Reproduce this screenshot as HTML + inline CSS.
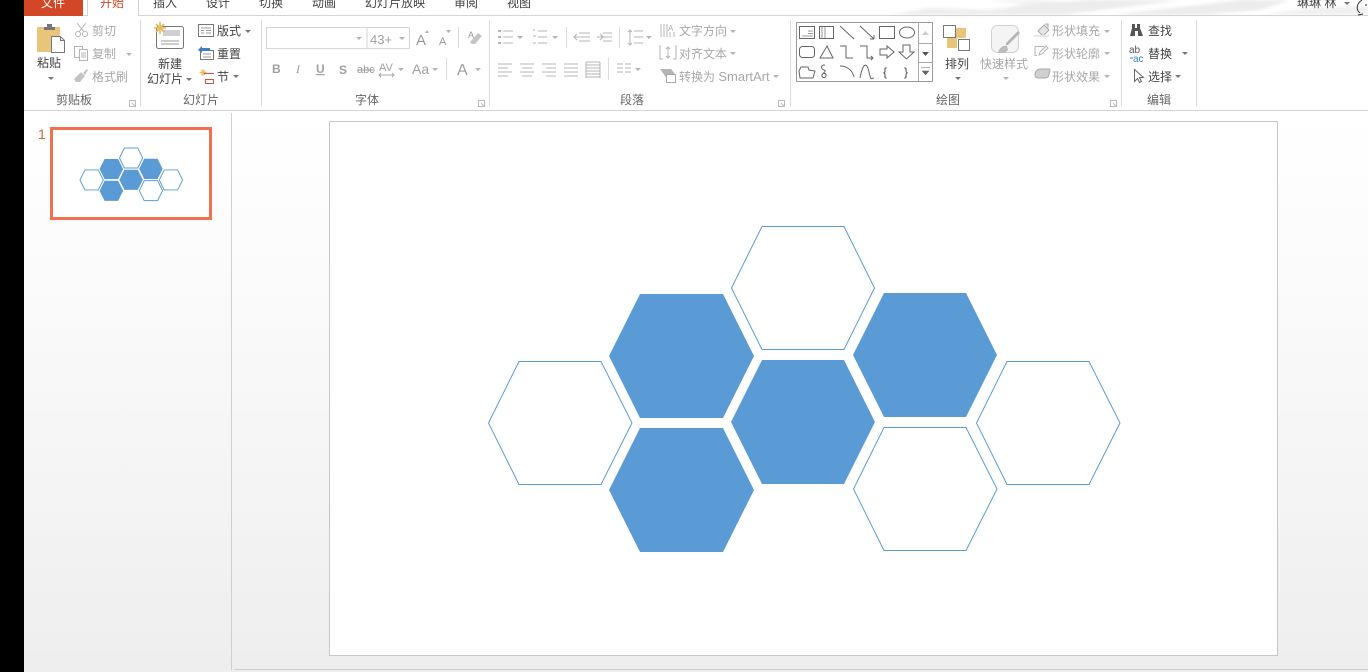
<!DOCTYPE html>
<html lang="zh"><head><meta charset="utf-8"><title>PowerPoint</title>
<style>
html,body{margin:0;padding:0;width:1368px;height:672px;overflow:hidden;background:#fff}
svg{display:block}
text{font-family:"Liberation Sans","Noto Sans CJK SC",sans-serif;font-size:12px;fill:#444}
.g text,text.g{fill:#a8a8a8}
.lb{fill:#666}
.i{fill:none;stroke:#777;stroke-width:1}
.d{fill:none;stroke:#b4b4b4;stroke-width:1}
.sep{stroke:#dcdcdc;stroke-width:1}
.ar{fill:#777}
.ag{fill:#b4b4b4}
.sh{fill:none;stroke:#666;stroke-width:1}
.hf{fill:#5b9bd5}
.ho{fill:#fff;stroke:#5b9bd5;stroke-width:1}
</style></head><body>
<svg width="1368" height="672" viewBox="0 0 1368 672" xmlns="http://www.w3.org/2000/svg">
<defs>
<linearGradient id="bg" x1="0" y1="0" x2="0" y2="1"><stop offset="0" stop-color="#ffffff"/><stop offset="0.3" stop-color="#fbfbfb"/><stop offset="1" stop-color="#eeeeee"/></linearGradient>
<filter id="bl" x="-20%" y="-100%" width="140%" height="300%"><feGaussianBlur stdDeviation="1.5"/></filter>
</defs>
<rect width="1368" height="672" fill="#fff"/>
<rect x="24" y="111" width="1344" height="561" fill="url(#bg)"/>
<rect x="0" y="0" width="24" height="672" fill="#000"/>

<!-- title pattern -->
<g filter="url(#bl)" fill="#ececec">
<path d="M890 15 L930 8 L990 10 L1040 3 L1090 0 L1180 0 L1110 9 L1060 15Z"/>
<path d="M1110 15 L1190 6 L1240 0 L1290 0 L1260 10 L1200 15Z"/>
<path d="M985 0 L1060 0 L1030 5Z" fill="#f2f2f2"/>
<path d="M1260 15 L1310 8 L1368 6 L1368 15Z" fill="#f0f0f0"/>
</g>
<line x1="24" y1="15.5" x2="87" y2="15.5" stroke="#d4d4d4"/>
<line x1="138" y1="15.5" x2="1368" y2="15.5" stroke="#d4d4d4"/>

<!-- tabs -->
<rect x="24" y="0" width="59" height="16" fill="#d24726"/>
<text x="41" y="7" style="fill:#fff">文件</text>
<path d="M87.5 0V16M138.5 0V16" stroke="#d4d4d4" fill="none"/>
<text x="100" y="7" style="fill:#d24726">开始</text>
<text x="153" y="7">插入</text><text x="206" y="7">设计</text><text x="259" y="7">切换</text><text x="312" y="7">动画</text>
<text x="365" y="7">幻灯片放映</text><text x="454" y="7">审阅</text><text x="507" y="7">视图</text>
<text x="1297" y="7">琳琳 林</text>
<path class="ar" d="M1344 2h6l-3 3z"/>
<path d="M1362 0C1356 4 1356 10 1360 13M1358 15l5-1M1366 4v2" fill="none" stroke="#333" stroke-width="1"/>

<!-- ribbon borders -->
<line x1="24" y1="110.5" x2="1368" y2="110.5" stroke="#d4d4d4"/>
<g class="sep"><line x1="140.5" y1="20" x2="140.5" y2="106"/><line x1="261.5" y1="20" x2="261.5" y2="106"/><line x1="489.5" y1="20" x2="489.5" y2="106"/><line x1="790.5" y1="20" x2="790.5" y2="106"/><line x1="1121.5" y1="20" x2="1121.5" y2="106"/><line x1="1196.5" y1="20" x2="1196.5" y2="106"/></g>

<!-- group labels -->
<text class="lb" x="56" y="104">剪贴板</text><text class="lb" x="183" y="104">幻灯片</text><text class="lb" x="355" y="104">字体</text><text class="lb" x="620" y="104">段落</text><text class="lb" x="936" y="104">绘图</text><text class="lb" x="1147" y="104">编辑</text>
<g fill="none" stroke="#bbb"><path d="M129.5 100.5h6v6h-6zM132 103l3 3"/><path d="M478.5 100.5h6v6h-6zM481 103l3 3"/><path d="M778.5 100.5h6v6h-6zM781 103l3 3"/><path d="M1110.5 100.5h6v6h-6zM1113 103l3 3"/></g>

<!-- clipboard -->
<rect x="37" y="27" width="23" height="25" rx="1" fill="#e9c57c"/>
<path d="M44 30v-3h3v-3h5v3h3v3z" fill="#777"/>
<path d="M51.5 36.5h9l4 4v12h-13z" fill="#fff" stroke="#777"/><path d="M60.5 36.5v4h4" fill="none" stroke="#777"/>
<text x="37" y="67">粘贴</text><path class="ar" d="M48 77h6l-3 3z"/>
<path class="d" d="M77 23l7 9M86 23l-7 9"/><circle class="d" cx="78" cy="34" r="2.5"/><circle class="d" cx="85" cy="34" r="2.5"/>
<g class="d"><rect x="74.5" y="46.5" width="8" height="11"/><rect x="79.5" y="49.5" width="8" height="11" fill="#fff"/><path d="M81 53h5M81 55h5M81 57h5"/></g>
<path d="M74 79l7-7 4 4-5 6h-4zM83 73l4-4 1 1-3 5z" fill="#c4c4c4"/>
<g class="g"><text x="92" y="35">剪切</text><text x="92" y="58">复制</text><text x="92" y="81">格式刷</text></g>
<path class="ag" d="M126 53h6l-3 3z"/>

<!-- slides -->
<rect x="156.5" y="26.5" width="27" height="22" rx="2" fill="#fff" stroke="#777"/>
<rect x="163" y="30" width="17" height="6" fill="#cfcfcf"/><path d="M161 41h18M161 44h18" stroke="#999" fill="none"/>
<path d="M160 22v12M154 28h12M156 24l8 8M164 24l-8 8" stroke="#e9b75c" stroke-width="1.6"/>
<text x="158" y="68">新建</text><text x="147" y="83">幻灯片</text><path class="ar" d="M186 78h6l-3 3z"/>
<rect x="198.5" y="24.5" width="15" height="12" fill="#fff" stroke="#777"/><path d="M201 28h10M201 30.5h3M206 30.5h5M201 33h3M206 33h5" stroke="#999" fill="none"/>
<text x="217" y="35">版式</text><path class="ar" d="M245 30h6l-3 3z"/>
<rect x="200.5" y="50.5" width="13" height="9" fill="#fff" stroke="#777"/><path d="M203 54h8M203 57h8" stroke="#999" fill="none"/>
<path d="M198 50l4-4v2h8v3h-8v2z" fill="#3f7fbf"/>
<text x="217" y="58">重置</text>
<path d="M203 69v7M199.5 72.500h7M201 70l4 5M205 70l-4 5" stroke="#e9b75c"/>
<path d="M204 73.500h10M205 79.500h9M205 83.500h9M205.500 79v5M213.500 79v5" fill="none" stroke="#c9563c"/>
<text x="217" y="81">节</text><path class="ar" d="M233 75h6l-3 3z"/>

<!-- font -->
<rect x="266.500" y="27.500" width="143" height="21" fill="#fff" stroke="#d6d6d6"/><line x1="367" y1="27" x2="367" y2="49" stroke="#d6d6d6"/>
<text x="370" y="44" class="g" style="font-size:13px;fill:#a0a0a0">43+</text>
<path class="ag" d="M356 37h6l-3 3zM399 37h6l-3 3z"/>
<text x="416" y="45" class="g" style="font-size:15px;fill:#999">A</text><path class="ag" d="M425 33l2-3 2 3z"/>
<text x="439" y="45" class="g" style="font-size:11px;fill:#999">A</text><path class="ag" d="M446 30h5l-2.500 3z"/>
<line x1="458.500" y1="27" x2="458.500" y2="48" class="sep"/>
<text x="468" y="38" style="font-size:9px;fill:#999">A</text><path d="M470 42l8-9 4 3-7 8h-3z" fill="#c4c4c4"/>
<g style="fill:#999">
<text x="272" y="73" style="font-weight:bold;fill:#a0a0a0">B</text>
<text x="296" y="73" style="font-style:italic;fill:#a0a0a0;font-family:'Liberation Serif',serif">I</text>
<text x="316" y="73" style="fill:#a0a0a0;font-weight:bold;text-decoration:underline">U</text>
<text x="339" y="74" style="fill:#a0a0a0;font-weight:bold">S</text>
<text x="357" y="73" style="fill:#a0a0a0;font-size:11px;text-decoration:line-through">abc</text>
<text x="379" y="71" style="fill:#a0a0a0;font-size:11px">AV</text>
<path d="M379 75h15M381 73l-2 2 2 2M392 73l2 2-2 2" fill="none" stroke="#a8a8a8"/>
<text x="412" y="74" style="fill:#a0a0a0;font-size:14px">Aa</text>
<text x="457" y="75" style="fill:#a0a0a0;font-size:16px">A</text>
</g>
<path class="ag" d="M398 68h6l-3 3zM432 68h6l-3 3zM475 68h6l-3 3z"/>
<line x1="446.500" y1="58" x2="446.500" y2="80" class="sep"/>

<!-- paragraph -->
<g class="d">
<path d="M503 31h10M503 37h10M503 43h10"/><path d="M498 31h3M498 37h3M498 43h3" stroke-width="2"/>
<path d="M538 31h9M538 37h9M538 43h9M533 30h2M533 36h3M533 43h3"/>
<path d="M579 33h11M579 37h11M579 41h11M574 37h6M577 34l-3 3 3 3"/>
<path d="M603 33h9M603 37h9M603 41h9M597 37h6M600 34l3 3-3 3"/>
<path d="M634 31h9M634 37h9M634 43h9M630 30v15M628 32l2-2 2 2M628 43l2 2 2-2"/>
<path d="M498 64h14M498 68h10M498 72h14M498 76h10"/>
<path d="M520 64h14M522 68h10M520 72h14M522 76h10"/>
<path d="M542 64h14M546 68h10M542 72h14M546 76h10"/>
<path d="M564 64h14M564 68h14M564 72h14M564 76h14"/>
<path d="M586 62h14M586 65h14M586 68h14M586 71h14M586 74h14M586 77h14M586 62v16M600 62v16"/>
<path d="M617 64h6M625 64h6M617 68h6M625 68h6M617 72h6M625 72h6"/>
<path d="M661 24v13M664 24v13M667 24v13M670 32v5M674 32v5"/>
<path d="M661 46h-1v13h3M675 46h1v13h-3M668 47v11M666 49l2-2 2 2M666 56l2 2 2-2"/>
</g>
<text x="668" y="31" style="font-size:8px;fill:#aaa">A</text>
<path class="ag" d="M517 36h6l-3 3zM552 36h6l-3 3zM646 36h6l-3 3zM635 68h6l-3 3zM730 30h6l-3 3zM730 52h6l-3 3zM773 75h6l-3 3z"/>
<g class="sep"><line x1="566.500" y1="27" x2="566.500" y2="48"/><line x1="619.500" y1="27" x2="619.500" y2="48"/><line x1="608.500" y1="58" x2="608.500" y2="80"/></g>
<path d="M660 69h11l4 5h-7v6z" fill="#b4b4b4"/><rect x="666.500" y="74.500" width="9" height="8" fill="#fff" stroke="#a8a8a8"/>
<g class="g"><text x="679" y="35">文字方向</text><text x="679" y="58">对齐文本</text><text x="679" y="81">转换为 <tspan style="font-size:13px">SmartArt</tspan></text></g>

<!-- shapes gallery -->
<rect x="796.500" y="22.500" width="136" height="59" fill="#fff" stroke="#999"/>
<path d="M918.500 22v59M918 43.500h15M918 62.500h15" stroke="#aaa" fill="none"/>
<path d="M922 35l3.500-4 3.500 4z" fill="#ccc"/><path d="M922 52h7l-3.500 4z" fill="#555"/><path d="M921 67.500h9M922 71h7l-3.500 4z" fill="#666" stroke="#666" stroke-width=".5"/>
<g class="sh">
<rect x="799.500" y="26.500" width="15" height="12"/><path d="M808 31h5M808 33.500h5M802 36h11" stroke="#999"/>
<rect x="819.500" y="26.500" width="14" height="12"/><path d="M822 27v11M825 27v11" stroke="#999"/>
<path d="M840 26l14 13"/><path d="M860 26l14 13M874 39v-4M874 39h-4"/>
<rect x="879.500" y="26.500" width="15" height="12"/><ellipse cx="907" cy="32.500" rx="7.500" ry="5.500"/>
<rect x="799.500" y="46.500" width="15" height="11" rx="3"/><path d="M827 46l6 12h-13z"/>
<path d="M840 46h6v12h7"/><path d="M860 46h7v12h6M871 56l2 2-2 2"/>
<path d="M880 49h7v-3l7 6-7 6v-3h-7z"/><path d="M903 45h7v7h4l-7.500 7-7.500-7h4z"/>
<path d="M801 67h7l1 3 6 1-2 7h-13l-1-7z"/><path d="M825 65c-5 0-4 4-1 5s-1 3-2 5 3 4 4 1-3-3-3-3"/>
<path d="M840 66c6 0 12 3 14 11"/><path d="M860 78c3-16 7-16 9-6s3 6 5 6"/>
</g>
<text x="883" y="76" style="fill:#444;font-size:12px">{</text><text x="904" y="76" style="fill:#444;font-size:12px">}</text>

<!-- arrange -->
<rect x="943.500" y="25.500" width="12" height="12" fill="#fff" stroke="#777"/>
<rect x="956" y="28" width="10" height="10" fill="#e9c57c"/><rect x="947" y="38" width="10" height="10" fill="#e9c57c"/>
<rect x="958.500" y="39.500" width="11" height="11" fill="#fff" stroke="#777"/>
<text x="945" y="68">排列</text><path class="ar" d="M955 77h6l-3 3z"/>
<rect x="991.500" y="25.500" width="27" height="27" rx="6" fill="#f4f4f4" stroke="#cfcfcf"/>
<path d="M1020 33l-12 12-2 0 0-2 12-12z" fill="#b5b5b5"/><path d="M998 53c1-5 5-8 9-7l1 4-3 3z" fill="#bcbcbc"/>
<text class="g" x="980" y="68">快速样式</text><path class="ag" d="M1003 77h6l-3 3z"/>
<path d="M1038 31l6-6 5 5-6 6zM1045 24h3v4" fill="#e4e4e4" stroke="#aaa"/><rect x="1034" y="35" width="15" height="2" fill="#e6e6e6"/>
<path class="d" d="M1035 46.500h9M1035 46.500v9h2M1048 48l-6 6-3 1 1-3 6-6z"/>
<path d="M1035 75c0-4 3-6 5-6h9c1 0 1 1 1 2l-2 6c-1 1-2 1-3 1h-7c-2 0-3-1-3-3z" fill="#d0d0d0" stroke="#aaa"/>
<g class="g"><text x="1052" y="35">形状填充</text><text x="1052" y="58">形状轮廓</text><text x="1052" y="81">形状效果</text></g>
<path class="ag" d="M1104 30h6l-3 3zM1104 52h6l-3 3zM1104 75h6l-3 3z"/>

<!-- editing -->
<path d="M1132 24h3v4h2v-4h3v4l3 8h-5v-5h-3v5h-5l2-8z" fill="#555"/>
<text x="1148" y="35">查找</text>
<text x="1129" y="53" style="font-size:10px;fill:#555">ab</text><text x="1133" y="62" style="font-size:10px;fill:#3f7fbf">ac</text><path d="M1130 58h3" stroke="#3f7fbf"/>
<text x="1148" y="58">替换</text><path class="ar" d="M1182 52h6l-3 3z"/>
<path d="M1134.500 69.500v12l3-3 2 4 2-1-2-4h4z" fill="#fff" stroke="#666"/>
<text x="1148" y="81">选择</text><path class="ar" d="M1175 75h6l-3 3z"/>

<!-- left pane -->
<text x="38" y="139" style="font-size:14px;fill:#c8654a">1</text>
<line x1="231.500" y1="113" x2="231.500" y2="670" stroke="#d0d0d0"/>
<line x1="234" y1="669.500" x2="1368" y2="669.500" stroke="#d0d0d0"/>
<rect x="51.500" y="128.500" width="159" height="90" fill="#fff" stroke="#f0704f" stroke-width="3"/>
<g transform="translate(0.6 111.200) scale(0.1625)">
<g fill="#5b9bd5"><polygon points="609,356 640,294 723,294 754,356 723,418 640,418"/><polygon points="609,490 640,428 723,428 754,490 723,552 640,552"/><polygon points="731,422 762,360 844,360 875,422 844,484 762,484"/><polygon points="853,355 884,293 966,293 997,355 966,417 884,417"/></g>
<g fill="#fff" stroke="#5b9bd5" stroke-width="6"><polygon points="731.500,288 762,226.500 844,226.500 874.500,288 844,349.500 762,349.500"/><polygon points="488.500,423 519,361.500 601,361.500 632,423 601,484.500 519,484.500"/><polygon points="853.500,489 884,427.500 966,427.500 997,489 966,550.500 884,550.500"/><polygon points="976.500,423 1007,361.500 1089,361.500 1120,423 1089,484.500 1007,484.500"/></g>
</g>

<!-- slide -->
<rect x="329.500" y="121.500" width="948" height="534" fill="#fff" stroke="#c6c6c6"/>
<polygon class="hf" points="609,356 640,294 723,294 754,356 723,418 640,418"/>
<polygon class="hf" points="609,490 640,428 723,428 754,490 723,552 640,552"/>
<polygon class="hf" points="731,422 762,360 844,360 875,422 844,484 762,484"/>
<polygon class="hf" points="853,355 884,293 966,293 997,355 966,417 884,417"/>
<polygon class="ho" points="731.500,288 762,226.500 844,226.500 874.500,288 844,349.500 762,349.500"/>
<polygon class="ho" points="488.500,423 519,361.500 601,361.500 632,423 601,484.500 519,484.500"/>
<polygon class="ho" points="853.500,489 884,427.500 966,427.500 997,489 966,550.500 884,550.500"/>
<polygon class="ho" points="976.500,423 1007,361.500 1089,361.500 1120,423 1089,484.500 1007,484.500"/>
</svg>
</body></html>
